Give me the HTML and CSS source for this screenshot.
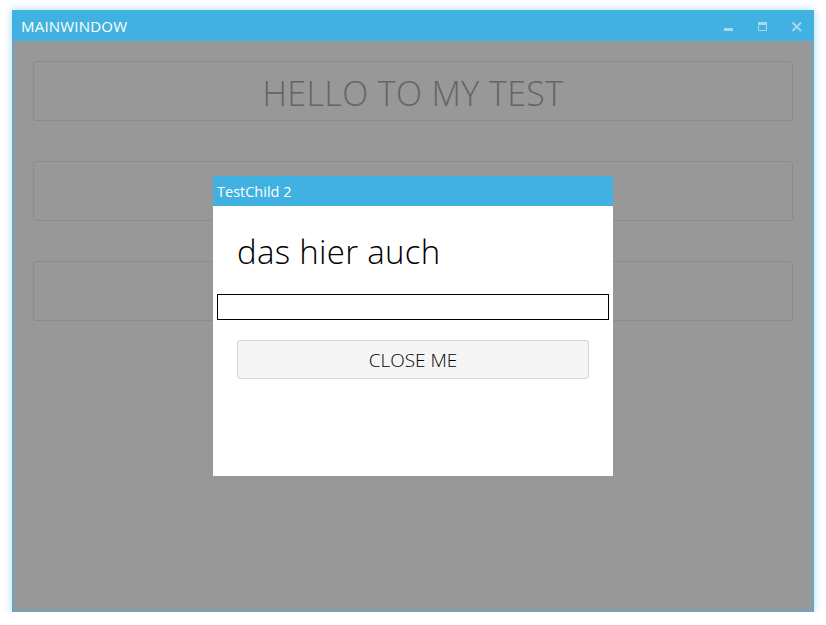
FILE: index.html
```html
<!DOCTYPE html>
<html>
<head>
<meta charset="utf-8">
<link rel="stylesheet" href="styles.css">
</head>
<body>
<div class="window">
  <div class="titlebar">
    <span class="title">MAINWINDOW</span>
    <div class="controls">
      <svg class="ctl" width="12" height="12" viewBox="0 0 12 12"><rect x="1" y="7" width="9" height="3" fill="#a6d8f0"/></svg>
      <svg class="ctl" width="12" height="12" viewBox="0 0 12 12"><path d="M1.5 1.5h8v8h-8z" fill="none" stroke="#a6d8f0" stroke-width="1"/><rect x="1" y="1" width="9" height="3" fill="#a6d8f0"/></svg>
      <svg class="ctl" width="12" height="12" viewBox="0 0 12 12"><path d="M1.5 1.5l8.5 8.5M10 1.5l-8.5 8.5" stroke="#a6d8f0" stroke-width="2"/></svg>
    </div>
  </div>
  <div class="content">
    <div class="panel"><span class="hello">HELLO TO MY TEST</span></div>
    <div class="panel"></div>
    <div class="panel"></div>
    <div class="overlay"></div>
    <div class="dialog">
      <div class="dtitle">TestChild 2</div>
      <div class="dbody">
        <div class="dtext">das hier auch</div>
        <input class="dinput" type="text">
        <button class="dbtn">CLOSE ME</button>
      </div>
    </div>
  </div>
</div>
</body>
</html>
```
FILE: styles.css
```css
html, body { margin: 0; padding: 0; background: #fff; }
body { font-family: "Open Sans", "Noto Sans", sans-serif; }
.window {
  position: relative;
  margin: 10px 0 0 12px;
  width: 800px;
  height: 600px;
  border: 1px solid #41b1e1;
  box-shadow: 0 0 8px rgba(65,177,225,0.45);
  display: flex;
  flex-direction: column;
}
.titlebar {
  height: 30px;
  background: #41b1e1;
  display: flex;
  align-items: center;
  padding-left: 8px;
  flex: none;
}
.title { color: #fff; font-size: 15px; letter-spacing: 0.2px; }
.controls { margin-left: auto; display: flex; gap: 22px; margin-right: 10px; margin-top: 2px; }
.ctl { display: block; }
.content {
  position: relative;
  flex: 1;
  background: #fff;
  padding: 20px 20px 0 20px;
  display: flex;
  flex-direction: column;
  gap: 40px;
}
.panel {
  height: 58px;
  border: 1px solid #eaeaea;
  border-radius: 3px;
  display: flex;
  align-items: center;
  justify-content: center;
}
.hello { font-size: 34px; font-weight: 300; color: #aaa; letter-spacing: 0.4px; padding-top: 3px; }
.overlay { position: absolute; inset: 0; background: rgba(0,0,0,0.404); }
.dialog {
  position: absolute;
  left: 200px;
  top: 135px;
  width: 400px;
  height: 300px;
  background: #fff;
  display: flex;
  flex-direction: column;
}
.dtitle {
  height: 30px;
  background: #41b1e1;
  color: #fff;
  font-size: 14.5px;
  display: flex;
  align-items: center;
  padding-left: 4px;
}
.dbody { display: flex; flex-direction: column; padding: 0 4px; }
.dtext { font-size: 33px; font-weight: 300; color: #000; margin: 26px 0 0 20px; line-height: 40px; letter-spacing: 0.3px; }
.dinput {
  margin-top: 22px;
  height: 26px;
  box-sizing: border-box;
  border: 1px solid #000;
  padding: 0;
  outline: none;
  width: 392px;
}
.dbtn {
  margin: 20px 0 0 20px;
  width: 352px;
  height: 39px;
  background: #f5f5f5;
  border: 1px solid #d5d5d5;
  border-radius: 3px;
  font-family: "Open Sans", sans-serif;
  font-size: 19px;
  font-weight: 300;
  color: #000;
}
```
